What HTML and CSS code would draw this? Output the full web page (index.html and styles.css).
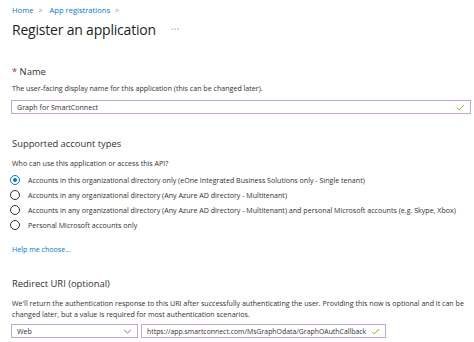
FILE: index.html
```html
<!DOCTYPE html>
<html lang="en">
<head>
    <meta charset="UTF-8">
    <title>Register an application</title>
    <link rel="stylesheet" href="styles.css">
</head>
<body>
    <div class="page">
        <nav class="breadcrumb">
            <a href="#">Home</a><span class="sep">&gt;</span>
            <a href="#">App registrations</a><span class="sep">&gt;</span>
        </nav>
        <div class="title-row">
            <h1>Register an application</h1>
            <svg class="more" viewBox="0 0 8 2" width="8" height="2"><circle cx="1" cy="1" r="0.6" fill="#605e5c"/><circle cx="4" cy="1" r="0.6" fill="#605e5c"/><circle cx="7" cy="1" r="0.6" fill="#605e5c"/></svg>
        </div>

        <section class="name-section">
            <div class="label"><span class="req">*</span> Name</div>
            <p class="desc">The user-facing display name for this application (this can be changed later).</p>
            <div class="field wide">
                <span class="value">Graph for SmartConnect</span>
                <svg class="check" viewBox="0 0 10 8" width="9" height="7"><path d="M1 4.2 L3.6 6.8 L9 1.2" fill="none" stroke="#6bb700" stroke-width="1"/></svg>
            </div>
        </section>

        <section class="accounts">
            <div class="label">Supported account types</div>
            <p class="desc">Who can use this application or access this API?</p>
            <ul class="radios">
                <li><span class="radio checked"></span>Accounts in this organizational directory only (eOne Integrated Business Solutions only - Single tenant)</li>
                <li><span class="radio"></span>Accounts in any organizational directory (Any Azure AD directory - Multitenant)</li>
                <li><span class="radio"></span>Accounts in any organizational directory (Any Azure AD directory - Multitenant) and personal Microsoft accounts (e.g. Skype, Xbox)</li>
                <li><span class="radio"></span>Personal Microsoft accounts only</li>
            </ul>
            <a class="help" href="#">Help me choose...</a>
        </section>

        <section class="redirect">
            <div class="label">Redirect URI (optional)</div>
            <p class="desc">We'll return the authentication response to this URI after successfully authenticating the user. Providing this now is optional and it can be changed later, but a value is required for most authentication scenarios.</p>
            <div class="uri-row">
                <div class="field select">
                    <span class="value">Web</span>
                    <svg class="chev" viewBox="0 0 10 6" width="9" height="5"><path d="M1 1 L5 5 L9 1" fill="none" stroke="#605e5c" stroke-width="1"/></svg>
                </div>
                <div class="field uri">
                    <span class="value">https://app.smartconnect.com/MsGraphOdata/GraphOAuthCallback</span>
                    <svg class="check" viewBox="0 0 10 8" width="9" height="7"><path d="M1 4.2 L3.6 6.8 L9 1.2" fill="none" stroke="#6bb700" stroke-width="1"/></svg>
                </div>
            </div>
        </section>
    </div>
</body>
</html>
```

FILE: styles.css
```css
* {
    box-sizing: border-box;
}

body {
    margin: 0;
    background-color: #fff;
    color: #323130;
    font-family: 'Open Sans', sans-serif;
}

.page {
    padding: 4px 3px 0 12px;
}

a {
    color: #0078d4;
    text-decoration: none;
}

.breadcrumb {
    font-size: 7.6px;
    line-height: 12px;
    height: 12px;
}

.breadcrumb .sep {
    color: #8a8886;
    margin: 0 5px;
    font-size: 7px;
}

.title-row {
    display: flex;
    align-items: center;
    margin-top: 3px;
    height: 20px;
}

h1 {
    margin: 0;
    font-size: 14px;
    letter-spacing: -0.2px;
    font-weight: 400;
    color: #201f1e;
}

.more {
    margin-left: 15px;
}

.label {
    font-size: 9.4px;
    line-height: 14px;
    color: #323130;
}

.req {
    color: #a4262c;
}

.desc {
    margin: 0;
    font-size: 7.1px;
    line-height: 11px;
}

.name-section {
    margin-top: 26px;
}

.name-section .desc {
    margin-top: 4px;
}

.field {
    display: flex;
    align-items: center;
    height: 14px;
    border: 1px solid #c3a5d6;
    padding: 0 5px;
    font-size: 7.1px;
}

.field .value {
    flex: 1;
    white-space: nowrap;
}

.wide {
    margin-top: 6px;
    margin-left: -1px;
    width: 460px;
}

.accounts {
    margin-top: 23px;
}

.accounts .desc {
    margin-top: 7px;
}

.radios {
    list-style: none;
    margin: 3px 0 0 -2px;
    padding: 0;
}

.radios li {
    display: flex;
    align-items: center;
    height: 15px;
    font-size: 7.1px;
    white-space: nowrap;
}

.radio {
    width: 10px;
    height: 10px;
    border: 1px solid #323130;
    border-radius: 50%;
    margin-right: 8px;
    flex: none;
    display: flex;
    align-items: center;
    justify-content: center;
}

.radio.checked {
    border-color: #0078d4;
}

.radio.checked::after {
    content: "";
    width: 4px;
    height: 4px;
    border-radius: 50%;
    background-color: #0078d4;
}

.help {
    display: block;
    margin-top: 12px;
    font-size: 7.1px;
    line-height: 11px;
}

.redirect {
    margin-top: 22px;
}

.redirect .desc {
    margin-top: 7px;
}

.uri-row {
    display: flex;
    gap: 3px;
    margin-top: 4px;
    margin-left: -1px;
}

.select {
    width: 127px;
}

.uri {
    width: 245px;
    font-size: 6.9px;
}
```
